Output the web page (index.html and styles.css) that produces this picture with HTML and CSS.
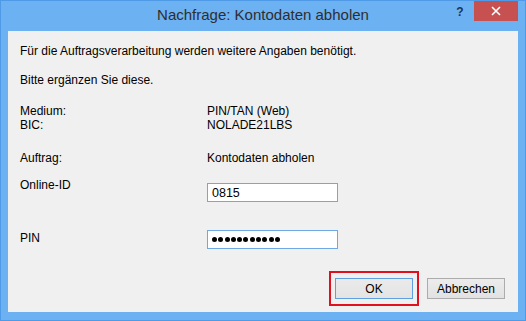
FILE: index.html
```html
<!DOCTYPE html>
<html lang="de">
<head>
<meta charset="utf-8">
<title>Nachfrage: Kontodaten abholen</title>
<link rel="stylesheet" href="styles.css">
</head>
<body>
<div class="window">
  <div class="titlebar">
    <div class="spacer"></div>
    <div class="title">Nachfrage: Kontodaten abholen</div>
    <div class="controls">
      <div class="help">?</div>
      <div class="close">
        <svg width="10" height="10" viewBox="0 0 10 10"><path d="M1 1 L9 9 M9 1 L1 9" stroke="#ffffff" stroke-width="1.6" fill="none"/></svg>
      </div>
    </div>
  </div>
  <div class="content">
    <p class="line first">Für die Auftragsverarbeitung werden weitere Angaben benötigt.</p>
    <p class="line second">Bitte ergänzen Sie diese.</p>
    <div class="info">
      <div class="label">Medium:</div><div class="value">PIN/TAN (Web)</div>
      <div class="label">BIC:</div><div class="value">NOLADE21LBS</div>
    </div>
    <div class="info auftrag">
      <div class="label">Auftrag:</div><div class="value">Kontodaten abholen</div>
    </div>
    <div class="field online">
      <div class="flabel">Online-ID</div>
      <div class="input"><span class="itext">0815</span></div>
    </div>
    <div class="field pin">
      <div class="flabel">PIN</div>
      <div class="input"><span class="dots"><i></i><i></i><i></i><i></i><i></i><i></i><i></i><i></i><i></i><i></i><i></i></span></div>
    </div>
    <div class="buttons">
      <div class="highlight"><button class="btn default">OK</button></div>
      <button class="btn">Abbrechen</button>
    </div>
  </div>
</div>
</body>
</html>
```
FILE: styles.css
```css
* { box-sizing: border-box; }
html, body { margin: 0; padding: 0; }
body {
  width: 526px;
  height: 321px;
  overflow: hidden;
  font-family: "Liberation Sans", Arial, sans-serif;
  font-size: 12px;
  color: #000;
}
.window {
  width: 526px;
  height: 321px;
  border: 1px solid #4e9ae6;
  background: #6cb1f2;
  display: flex;
  flex-direction: column;
}
.titlebar {
  height: 30px;
  display: grid;
  grid-template-columns: 1fr auto 1fr;
  align-items: start;
}
.title {
  padding-top: 5px;
  font-size: 15px;
  line-height: 18px;
  color: #2e2e2e;
  white-space: nowrap;
}
.controls {
  justify-self: end;
  display: flex;
  align-items: flex-start;
  padding-right: 7px;
}
.help {
  width: 28px;
  height: 20px;
  text-align: center;
  font-weight: bold;
  font-size: 12px;
  line-height: 20px;
  padding-top: 1px;
  color: #1d3556;
}
.close {
  width: 44px;
  height: 20px;
  background: #c75050;
  display: flex;
  align-items: center;
  justify-content: center;
}
.close svg { display: block; }
.content {
  flex: 1;
  margin: 0 7px 8px;
  background: #f0f0f0;
  display: flex;
  flex-direction: column;
  padding: 13px 13px 6px 12px;
}
.line {
  margin: 0;
  line-height: 14px;
}
.second { margin-top: 15px; }
.info {
  display: grid;
  grid-template-columns: 187px 1fr;
  line-height: 14px;
  margin-top: 17px;
}
.auftrag { margin-top: 19px; }
.field {
  display: flex;
  align-items: flex-start;
}
.flabel {
  width: 187px;
  line-height: 14px;
}
.online { margin-top: 13px; }
.online .input { margin-top: 5px; }
.pin { margin-top: 28px; }
.pin .flabel { margin-top: 1px; }
.input {
  width: 131px;
  height: 19px;
  border: 1px solid #6fa8e4;
  background: #fff;
  padding-left: 4px;
  display: flex;
  align-items: center;
}
.itext { font-size: 12.5px; line-height: 14px; }
.dots { display: flex; gap: 1.3px; }
.dots i {
  display: block;
  width: 5px;
  height: 5px;
  border-radius: 50%;
  background: #000;
}
.buttons {
  margin-top: auto;
  display: flex;
  justify-content: flex-end;
  align-items: center;
  gap: 8px;
}
.highlight {
  border: 2px solid #e0101c;
  padding: 5px 4px;
}
.btn {
  display: block;
  width: 78px;
  height: 21px;
  margin: 0;
  padding: 0;
  font-family: "Liberation Sans", Arial, sans-serif;
  font-size: 12px;
  color: #000;
  border: 1px solid #acacac;
  background: linear-gradient(#ececec, #e2e2e2);
}
.btn.default {
  border-color: #5d9fe0;
  background: linear-gradient(#eaeaea, #e4e4e4);
}
```
